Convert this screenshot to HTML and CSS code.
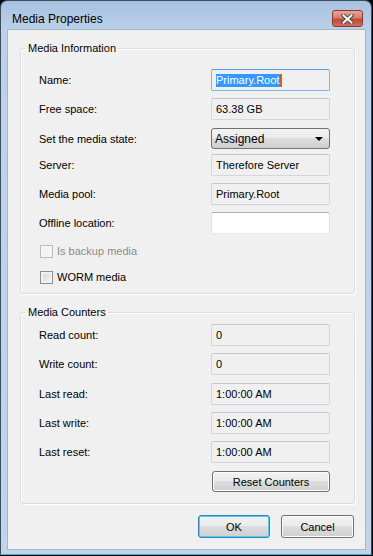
FILE: index.html
```html
<!DOCTYPE html>
<html lang="en">
<head>
    <meta charset="utf-8"/>
    <title>Media Properties</title>
    <link rel="stylesheet" href="styles.css">
</head>
<body>
    <div class="window">
        <div class="titlebar">
            <div class="title">Media Properties</div>
            <div class="close">
                <svg width="13" height="10" viewBox="0 0 13 10">
                    <path d="M2.5 1.5 L10.5 8.5 M10.5 1.5 L2.5 8.5" stroke="#4a4a4a" stroke-width="4" stroke-linecap="square" fill="none"/>
                    <path d="M2.5 1.5 L10.5 8.5 M10.5 1.5 L2.5 8.5" stroke="#fff" stroke-width="2" stroke-linecap="square" fill="none"/>
                </svg>
            </div>
        </div>
        <div class="client">
            <fieldset class="group">
                <legend>Media Information</legend>
                <div class="group-body info">
                    <div class="row">
                        <div class="label">Name:</div>
                        <div class="field focus"><span class="sel">Primary.Root</span><span class="caret"></span></div>
                    </div>
                    <div class="row">
                        <div class="label">Free space:</div>
                        <div class="field">63.38 GB</div>
                    </div>
                    <div class="row combo-row">
                        <div class="label">Set the media state:</div>
                        <div class="combo"><span>Assigned</span><span class="arrow"></span></div>
                    </div>
                    <div class="row after-combo">
                        <div class="label">Server:</div>
                        <div class="field">Therefore Server</div>
                    </div>
                    <div class="row">
                        <div class="label">Media pool:</div>
                        <div class="field">Primary.Root</div>
                    </div>
                    <div class="row">
                        <div class="label">Offline location:</div>
                        <div class="field edit"></div>
                    </div>
                    <div class="check-row">
                        <span class="box disabled"></span>
                        <span class="check-label disabled">Is backup media</span>
                    </div>
                    <div class="check-row second">
                        <span class="box"></span>
                        <span class="check-label">WORM media</span>
                    </div>
                </div>
            </fieldset>

            <fieldset class="group counters">
                <legend>Media Counters</legend>
                <div class="group-body">
                    <div class="row">
                        <div class="label">Read count:</div>
                        <div class="field">0</div>
                    </div>
                    <div class="row">
                        <div class="label">Write count:</div>
                        <div class="field">0</div>
                    </div>
                    <div class="row wide">
                        <div class="label">Last read:</div>
                        <div class="field">1:00:00 AM</div>
                    </div>
                    <div class="row">
                        <div class="label">Last write:</div>
                        <div class="field">1:00:00 AM</div>
                    </div>
                    <div class="row">
                        <div class="label">Last reset:</div>
                        <div class="field">1:00:00 AM</div>
                    </div>
                    <button class="btn reset">Reset Counters</button>
                </div>
            </fieldset>

            <div class="footer">
                <button class="btn ok">OK</button>
                <button class="btn cancel">Cancel</button>
            </div>
        </div>
    </div>
</body>
</html>
```

FILE: styles.css
```css
body {
    margin: 0;
    padding: 0;
    background-color: #000;
    font-family: "Liberation Sans", Arial, sans-serif;
    font-size: 11px;
    color: #000;
}
.window {
    width: 372px;
    height: 555px;
    box-sizing: border-box;
    border: 1px solid #3e4d5c;
    border-bottom-color: #3fb3cf;
    border-radius: 7px 7px 0 0;
    background: linear-gradient(#a6c1df, #bcd2ea 30px, #c0d5ec);
    display: flex;
    flex-direction: column;
}
.titlebar {
    height: 29px;
    display: flex;
    justify-content: space-between;
    align-items: flex-start;
    padding: 0 8px 0 11px;
    box-sizing: border-box;
}
.title {
    font-size: 12px;
    line-height: 14px;
    margin-top: 11px;
}
.close {
    margin-top: 9px;
    width: 31px;
    height: 17px;
    box-sizing: border-box;
    border: 1px solid #8a3b30;
    border-radius: 3px;
    background: linear-gradient(#e7a596, #d6806f 45%, #c24a35 55%, #cf6b56);
    display: flex;
    justify-content: center;
    align-items: center;
}
.close svg {
    display: block;
}
.client {
    flex: 1;
    margin: 0 6px 5px 7px;
    padding: 11px 10px 0 12px;
    background-color: #f0f0f0;
    box-shadow: 0 0 0 1px #9fb7d0;
}
.group {
    margin: 0;
    padding: 0;
    border: 1px solid #d5dfe5;
    border-radius: 3px;
    box-shadow: inset 1px 1px 0 #fff, 1px 1px 0 #fff;
    min-width: 0;
}
.group legend {
    margin-left: 5px;
    padding: 0 2px;
    line-height: 14px;
    font-size: 11px;
}
.group-body {
    padding: 5px 0 11px 18px;
}
.group-body.info {
    padding-top: 14px;
    padding-bottom: 6px;
}
.counters {
    margin-top: 11px;
}
.row {
    display: flex;
    align-items: center;
    height: 22px;
    margin-top: 7px;
}
.row:first-child {
    margin-top: 0;
}
.combo-row {
    height: 21px;
    margin-top: 8px;
}
.after-combo {
    margin-top: 5px;
}
.wide {
    margin-top: 8px;
}
.label {
    width: 172px;
    flex-shrink: 0;
}
.field {
    width: 119px;
    height: 22px;
    box-sizing: border-box;
    border: 1px solid #d3d6da;
    border-top-color: #c3c7cc;
    border-radius: 2px;
    padding: 0 4px;
    display: flex;
    align-items: center;
    background-color: #f0f0f0;
    white-space: nowrap;
}
.field.focus {
    border-color: #7eb4ea;
    border-top-color: #569de5;
}
.field.edit {
    background-color: #fff;
    border-color: #abadb3 #dbdfe6 #e3e9ef #e2e3ea;
}
.sel {
    background-color: #3399ff;
    color: #fff;
    line-height: 13px;
    padding-right: 1px;
}
.caret {
    width: 2px;
    height: 13px;
    background-color: #cc661a;
}
.combo {
    width: 119px;
    height: 21px;
    box-sizing: border-box;
    border: 1px solid #707070;
    border-radius: 3px;
    background: linear-gradient(#f2f2f2, #ebebeb 50%, #dddddd 50%, #cfcfcf);
    display: flex;
    align-items: center;
    justify-content: space-between;
    padding: 0 6px 0 3px;
    font-size: 12px;
}
.arrow {
    width: 0;
    height: 0;
    border-left: 4px solid transparent;
    border-right: 4px solid transparent;
    border-top: 4px solid #000;
}
.check-row {
    display: flex;
    align-items: center;
    height: 20px;
    margin-top: 7px;
}
.check-row.second {
    margin-top: 6px;
}
.box {
    width: 13px;
    height: 13px;
    box-sizing: border-box;
    margin-left: 1px;
    margin-right: 4px;
    border: 1px solid #8e8f8f;
    background: linear-gradient(135deg, #cfd2d6, #f7f7f7);
    box-shadow: inset 0 0 0 2px #f2f2f2;
}
.box.disabled {
    border-color: #bcbcbc;
    background: #f4f4f4;
    box-shadow: none;
}
.check-label.disabled {
    color: #8d8d8d;
}
.btn {
    font-family: "Liberation Sans", Arial, sans-serif;
    font-size: 11px;
    color: #000;
    box-sizing: border-box;
    border: 1px solid #707070;
    border-radius: 3px;
    background: linear-gradient(#f2f2f2, #ebebeb 50%, #dddddd 50%, #cfcfcf);
    box-shadow: inset 0 0 0 1px #fcfcfc;
    padding: 0;
    margin: 0;
}
.reset {
    display: block;
    width: 118px;
    height: 21px;
    margin: 8px 0 0 173px;
}
.footer {
    display: flex;
    justify-content: flex-end;
    gap: 11px;
    margin-top: 11px;
    padding-right: 1px;
}
.ok {
    width: 72px;
    height: 23px;
    border-color: #3c7fb1;
    box-shadow: inset 0 0 0 1px #48d0f5;
}
.cancel {
    width: 73px;
    height: 23px;
}
```
